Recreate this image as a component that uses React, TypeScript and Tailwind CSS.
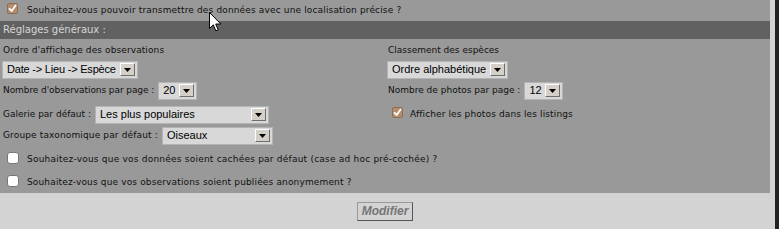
import React from 'react'

const label = "font-['DejaVu_Sans',sans-serif] text-[9px] text-[#111] whitespace-nowrap"

function Check({ checked }: { checked: boolean }) {
  return checked ? (
    <span className="w-[11px] h-[11px] rounded-[2px] bg-[#b48d6d] border border-[#8f6d52] flex items-center justify-center shrink-0">
      <svg width="9" height="9" viewBox="0 0 9 9">
        <path d="M1.5 4.8 L3.6 7 L7.6 1.4" fill="none" stroke="#fff" strokeWidth="1.8" strokeLinecap="round" strokeLinejoin="round" />
      </svg>
    </span>
  ) : (
    <span className="block w-[12px] h-[12px] rounded-[3px] bg-white border border-[#777] shrink-0" />
  )
}

function Select({ value, width, tight }: { value: string; width: string; tight?: boolean }) {
  return (
    <div className={`${width} h-[18px] flex items-center justify-between bg-[#d8d8d8] border border-[#b4b4b4] pl-[4px] pr-[2px] shrink-0`}>
      <span className={`font-['Liberation_Sans',Arial,sans-serif] text-[11px] text-black leading-none whitespace-nowrap ${tight ? 'tracking-[-0.2px]' : ''}`}>{value}</span>
      <span className="w-[15px] h-[13px] shrink-0 bg-[#d4d0c8] border border-t-white border-l-white border-r-[#6e6e6e] border-b-[#6e6e6e] flex items-center justify-center">
        <svg width="7" height="4" viewBox="0 0 7 4">
          <path d="M0 0 H7 L3.5 4 Z" fill="#000" />
        </svg>
      </span>
    </div>
  )
}

export default function App() {
  return (
    <div className="w-[779px] h-[229px] flex bg-[#222] overflow-hidden relative">
      <div className="w-[775px] bg-[#d3d3d3] flex flex-col">
        <div className="w-[770px] h-[193px] bg-[#999] flex flex-col">
          <div className="h-[22px] flex items-center pl-[7px] gap-[9px]">
            <span className="mb-[4px]"><Check checked /></span>
            <span className={`${label} tracking-[0.15px]`}>Souhaitez-vous pouvoir transmettre des données avec une localisation précise ?</span>
          </div>

          <div className="h-[19px] bg-[#616161] flex items-center pl-[3px] font-['DejaVu_Sans',sans-serif] text-[10px] text-[#d6d6d6]">
            Réglages généraux :
          </div>

          <div className="grid grid-cols-[384px_1fr] pl-[3px] pt-[3px]">
            <div className="flex flex-col">
              <div className={`${label} tracking-[0.1px] h-[16px] leading-[16px]`}>Ordre d'affichage des observations</div>
              <div className="mt-[3px] -ml-[1px]"><Select value="Date -> Lieu -> Espèce" width="w-[136px]" tight /></div>
              <div className="mt-[3px] h-[18px] flex items-center gap-[4px]">
                <span className={`${label} tracking-[-0.08px]`}>Nombre d'observations par page :</span>
                <Select value="20" width="w-[39px]" />
              </div>
              <div className="mt-[6px] h-[18px] flex items-center gap-[4px]">
                <span className={label}>Galerie par défaut :</span>
                <Select value="Les plus populaires" width="w-[174px]" />
              </div>
              <div className="mt-[3px] h-[18px] flex items-center gap-[4px]">
                <span className={`${label} tracking-[0.14px]`}>Groupe taxonomique par défaut :</span>
                <Select value="Oiseaux" width="w-[111px]" />
              </div>
            </div>

            <div className="flex flex-col">
              <div className={`${label} h-[16px] leading-[16px] pl-[1px]`}>Classement des espèces</div>
              <div className="mt-[3px]"><Select value="Ordre alphabétique" width="w-[121px]" /></div>
              <div className="mt-[3px] h-[18px] flex items-center gap-[4px] pl-[1px]">
                <span className={label}>Nombre de photos par page :</span>
                <Select value="12" width="w-[39px]" />
              </div>
              <div className="mt-[6px] h-[18px] flex items-center gap-[7px] pl-[5px]">
                <span className="mb-[4px]"><Check checked /></span>
                <span className={`${label} tracking-[0.12px]`}>Afficher les photos dans les listings</span>
              </div>
            </div>
          </div>

          <div className="mt-[5px] h-[22px] flex items-center pl-[7px] gap-[8px]">
            <span className="mb-[3px]"><Check checked={false} /></span>
            <span className={`${label} tracking-[0.22px]`}>Souhaitez-vous que vos données soient cachées par défaut (case ad hoc pré-cochée) ?</span>
          </div>
          <div className="mt-[2px] h-[22px] flex items-center pl-[7px] gap-[8px]">
            <span className="mb-[3px]"><Check checked={false} /></span>
            <span className={`${label} tracking-[0.15px]`}>Souhaitez-vous que vos observations soient publiées anonymement ?</span>
          </div>
        </div>

        <div className="w-[770px] flex-1 flex items-center justify-center">
          <button className="h-[19px] w-[56px] bg-[#d3d3d3] border border-t-[#999] border-l-[#999] border-r-[#555] border-b-[#555] font-['Liberation_Sans',Arial,sans-serif] text-[12px] font-bold italic text-[#767676] leading-none">
            Modifier
          </button>
        </div>
      </div>

      <svg className="absolute left-[209px] top-[12px]" width="13" height="21" viewBox="0 0 13 21">
        <path d="M0.5 0.5 L0.5 16.5 L4.3 12.8 L6.8 18.8 L9.2 17.8 L6.7 12 L11.8 12 Z" fill="#fff" stroke="#000" strokeWidth="1" strokeLinejoin="round" />
      </svg>
    </div>
  )
}
